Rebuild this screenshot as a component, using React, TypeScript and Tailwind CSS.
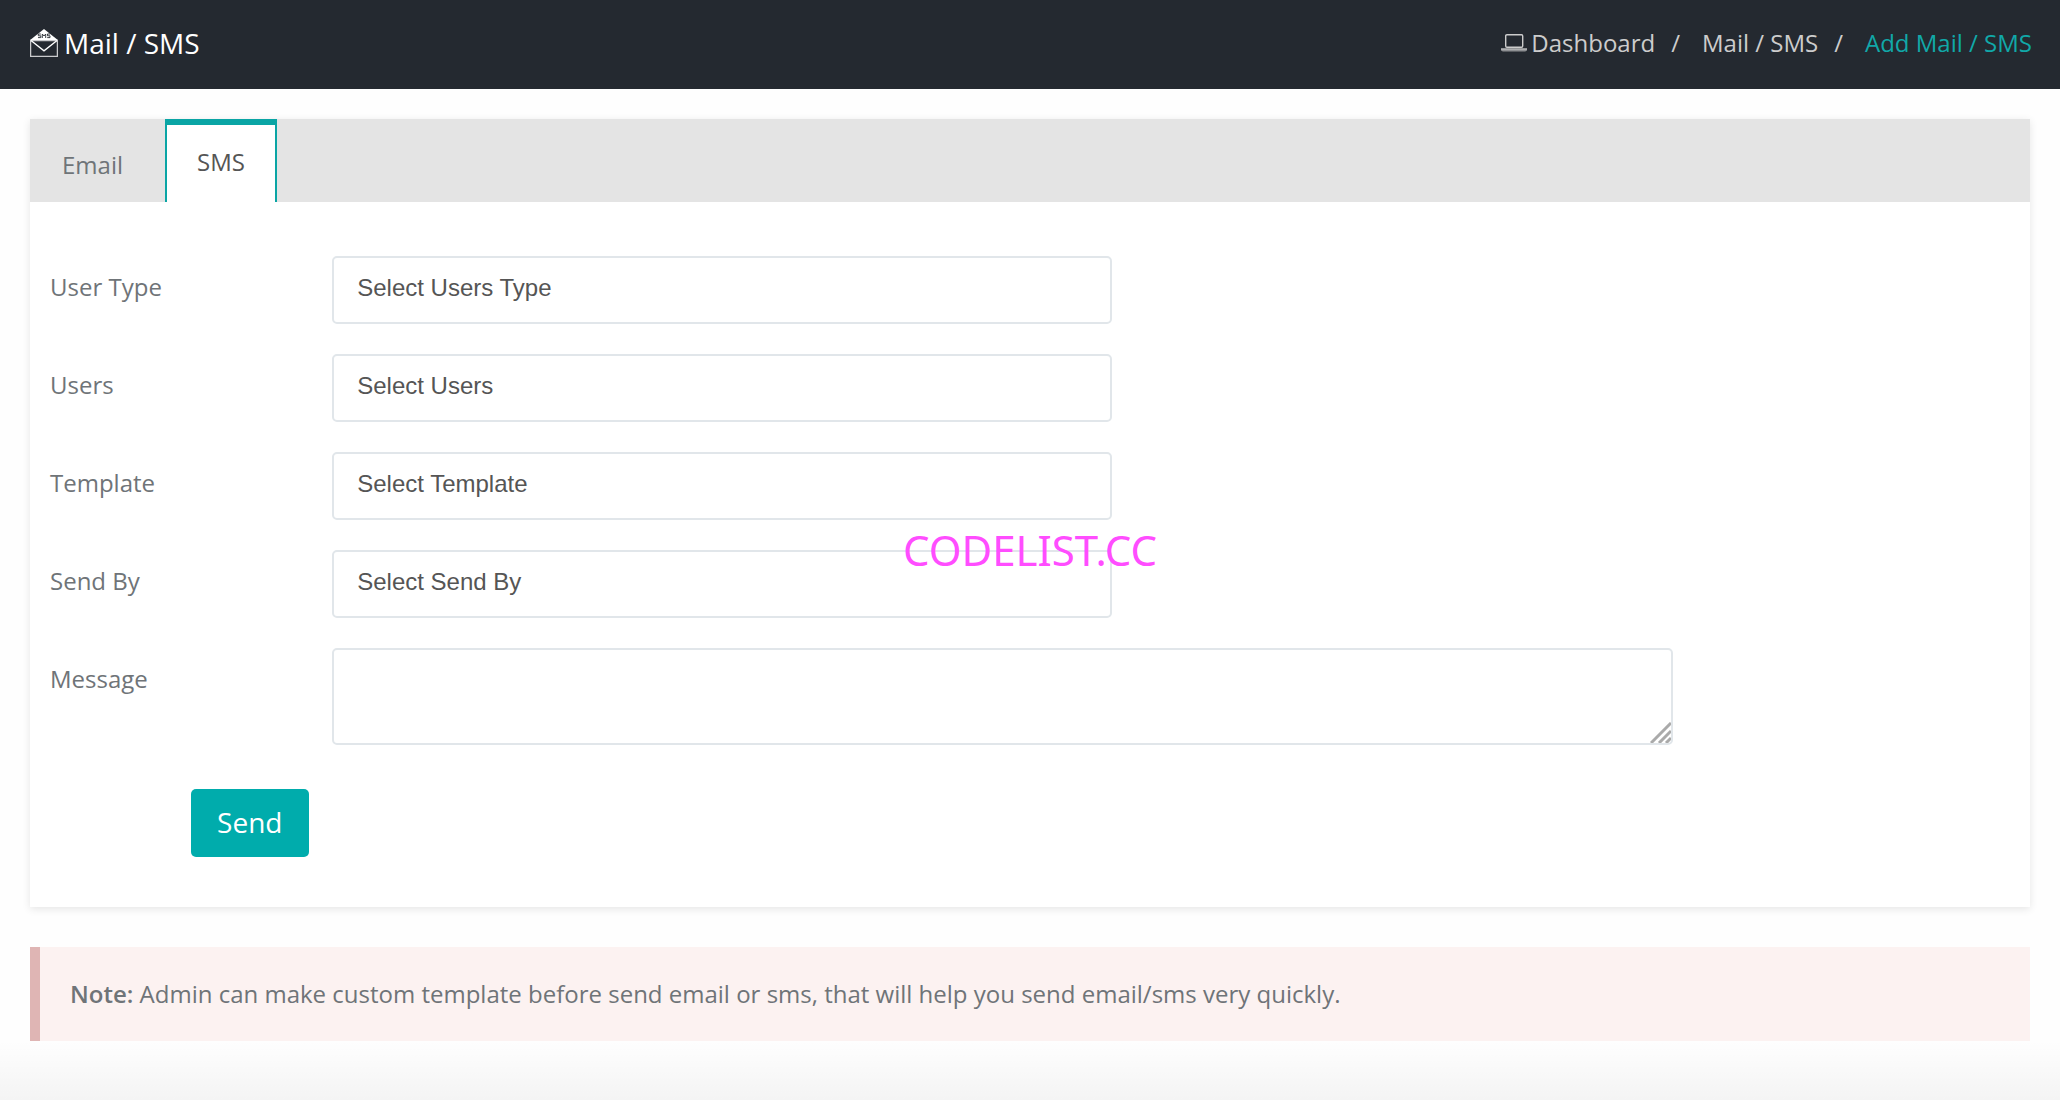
import { useId, useState } from "react";

function MailSmsIcon() {
  return (
    <svg width="28" height="28" viewBox="0 0 28 28" aria-hidden="true" className="shrink-0">
      <path d="M0.6 11.5 H27.4 V27.3 H0.6 Z" fill="none" stroke="#c9cacc" strokeWidth="1.3" />
      <path d="M1 11.5 L14 21.8 L27 11.5" fill="none" stroke="#fff" strokeWidth="1.3" />
      <path d="M14 0 L27.8 11 H0.2 Z" fill="#fff" />
      <path
        d="M10.8 5 H8.3 V6.8 H10.8 V8.6 H8 M12.3 9 V5 L14 7 L15.7 5 V9 M20 5 H17.5 V6.8 H20 V8.6 H17.2"
        fill="none"
        stroke="#242930"
        strokeWidth="0.9"
      />
    </svg>
  );
}

function LaptopIcon() {
  return (
    <svg width="26" height="18" viewBox="0 0 26 18" aria-hidden="true" className="shrink-0">
      <rect x="4.7" y="0.7" width="17" height="12.6" rx="1.2" fill="none" stroke="#ccc" strokeWidth="1.4" />
      <path d="M0 14.6 H26 V16 C26 16.8 25 17.4 24 17.4 H2 C1 17.4 0 16.8 0 16 Z" fill="#8d8f92" />
      <path d="M0 15 H26" stroke="#ccc" strokeWidth="1" />
    </svg>
  );
}

function SelectRow({ label, placeholder }: { label: string; placeholder: string }) {
  const id = useId();
  return (
    <div className="flex items-start">
      <label htmlFor={id} className="w-[14.4%] pt-[15px]">{label}</label>
      <select
        id={id}
        className="h-17 w-[39.8%] appearance-none rounded-[5px] border-2 border-[#e1e6ea] bg-white px-[23px] pb-1 font-['Liberation_Sans',sans-serif] text-2xl text-[#555]"
      >
        <option>{placeholder}</option>
      </select>
    </div>
  );
}

const fields = [
  { label: "User Type", placeholder: "Select Users Type" },
  { label: "Users", placeholder: "Select Users" },
  { label: "Template", placeholder: "Select Template" },
  { label: "Send By", placeholder: "Select Send By" },
];

export default function App() {
  const [tab, setTab] = useState("SMS");
  return (
    <div className="relative flex min-h-screen flex-col bg-[#fefefe] font-['Open_Sans',sans-serif] text-2xl text-[#6f7478]">
      <header className="flex items-center justify-between bg-[#242930] pt-6 pr-7 pb-[27px] pl-7.5">
        <h1 className="flex items-center gap-1.5 text-[28px] leading-[38px] font-medium text-white">
          <MailSmsIcon />
          Mail / SMS
        </h1>
        <nav aria-label="Breadcrumb" className="flex gap-4 text-[#ccc]">
          <a href="#dashboard" className="flex items-center gap-1">
            <LaptopIcon />
            Dashboard
          </a>
          <span>/</span>
          <a href="#mail-sms" className="ml-1.5">Mail / SMS</a>
          <span>/</span>
          <a href="#add" className="ml-1.5 text-[#11a8a8]">Add Mail / SMS</a>
        </nav>
      </header>

      <main className="flex grow flex-col gap-10 px-7.5 py-7.5">
        <section className="bg-white shadow-[0_2px_8px_rgba(0,0,0,0.1)]">
          <div role="tablist" className="flex h-[83px] gap-2.5 bg-[#e4e4e4]">
            {["Email", "SMS"].map((name) => (
              <button
                key={name}
                type="button"
                role="tab"
                aria-selected={tab === name}
                onClick={() => setTab(name)}
                className={
                  tab === name
                    ? "border-x-2 border-t-6 border-x-[#0aa5a5] border-t-[#0aa5a5] bg-white px-7.5 pb-1 text-[#555]"
                    : "px-8 pt-2"
                }
              >
                {name}
              </button>
            ))}
          </div>
          <form className="px-5 pt-[54px] pb-[50px]" onSubmit={(e) => e.preventDefault()}>
            <div className="flex flex-col gap-7.5">
              {fields.map((f) => (
                <SelectRow key={f.label} {...f} />
              ))}
              <div className="flex items-start">
                <label htmlFor="message" className="w-[14.4%] pt-[15px]">Message</label>
                <div className="relative flex w-[68.4%]">
                  <textarea
                    id="message"
                    className="h-[97px] w-full resize-none rounded-[5px] border-2 border-[#e1e6ea] bg-white px-[23px] py-3"
                  />
                  <svg
                    width="21"
                    height="21"
                    viewBox="0 0 21 21"
                    aria-hidden="true"
                    className="pointer-events-none absolute right-0.5 bottom-0.5"
                  >
                    <path d="M1 21 L21 1 M9 21 L21 9 M16 21 L21 16" stroke="#aaa" strokeWidth="3" />
                  </svg>
                </div>
              </div>
            </div>
            <button
              type="submit"
              className="mt-11 ml-[7.2%] h-17 rounded-[5px] bg-[#00acac] px-6.5 text-[28px] font-medium text-white"
            >
              Send
            </button>
          </form>
        </section>

        <aside className="border-l-10 border-[#dfb5b4] bg-[#fcf2f1] px-7.5 py-[29px] leading-9">
          <strong className="font-semibold">Note:</strong> Admin can make custom template before send email or sms, that
          will help you send email/sms very quickly.
        </aside>
      </main>

      <div className="pointer-events-none absolute inset-x-0 bottom-0 h-15 bg-linear-to-b from-transparent to-black/4" />
      <div className="pointer-events-none absolute inset-0 flex items-center justify-center">
        <span className="font-['Noto_Sans',sans-serif] text-[42px] text-[#ff4dff]">CODELIST.CC</span>
      </div>
    </div>
  );
}
